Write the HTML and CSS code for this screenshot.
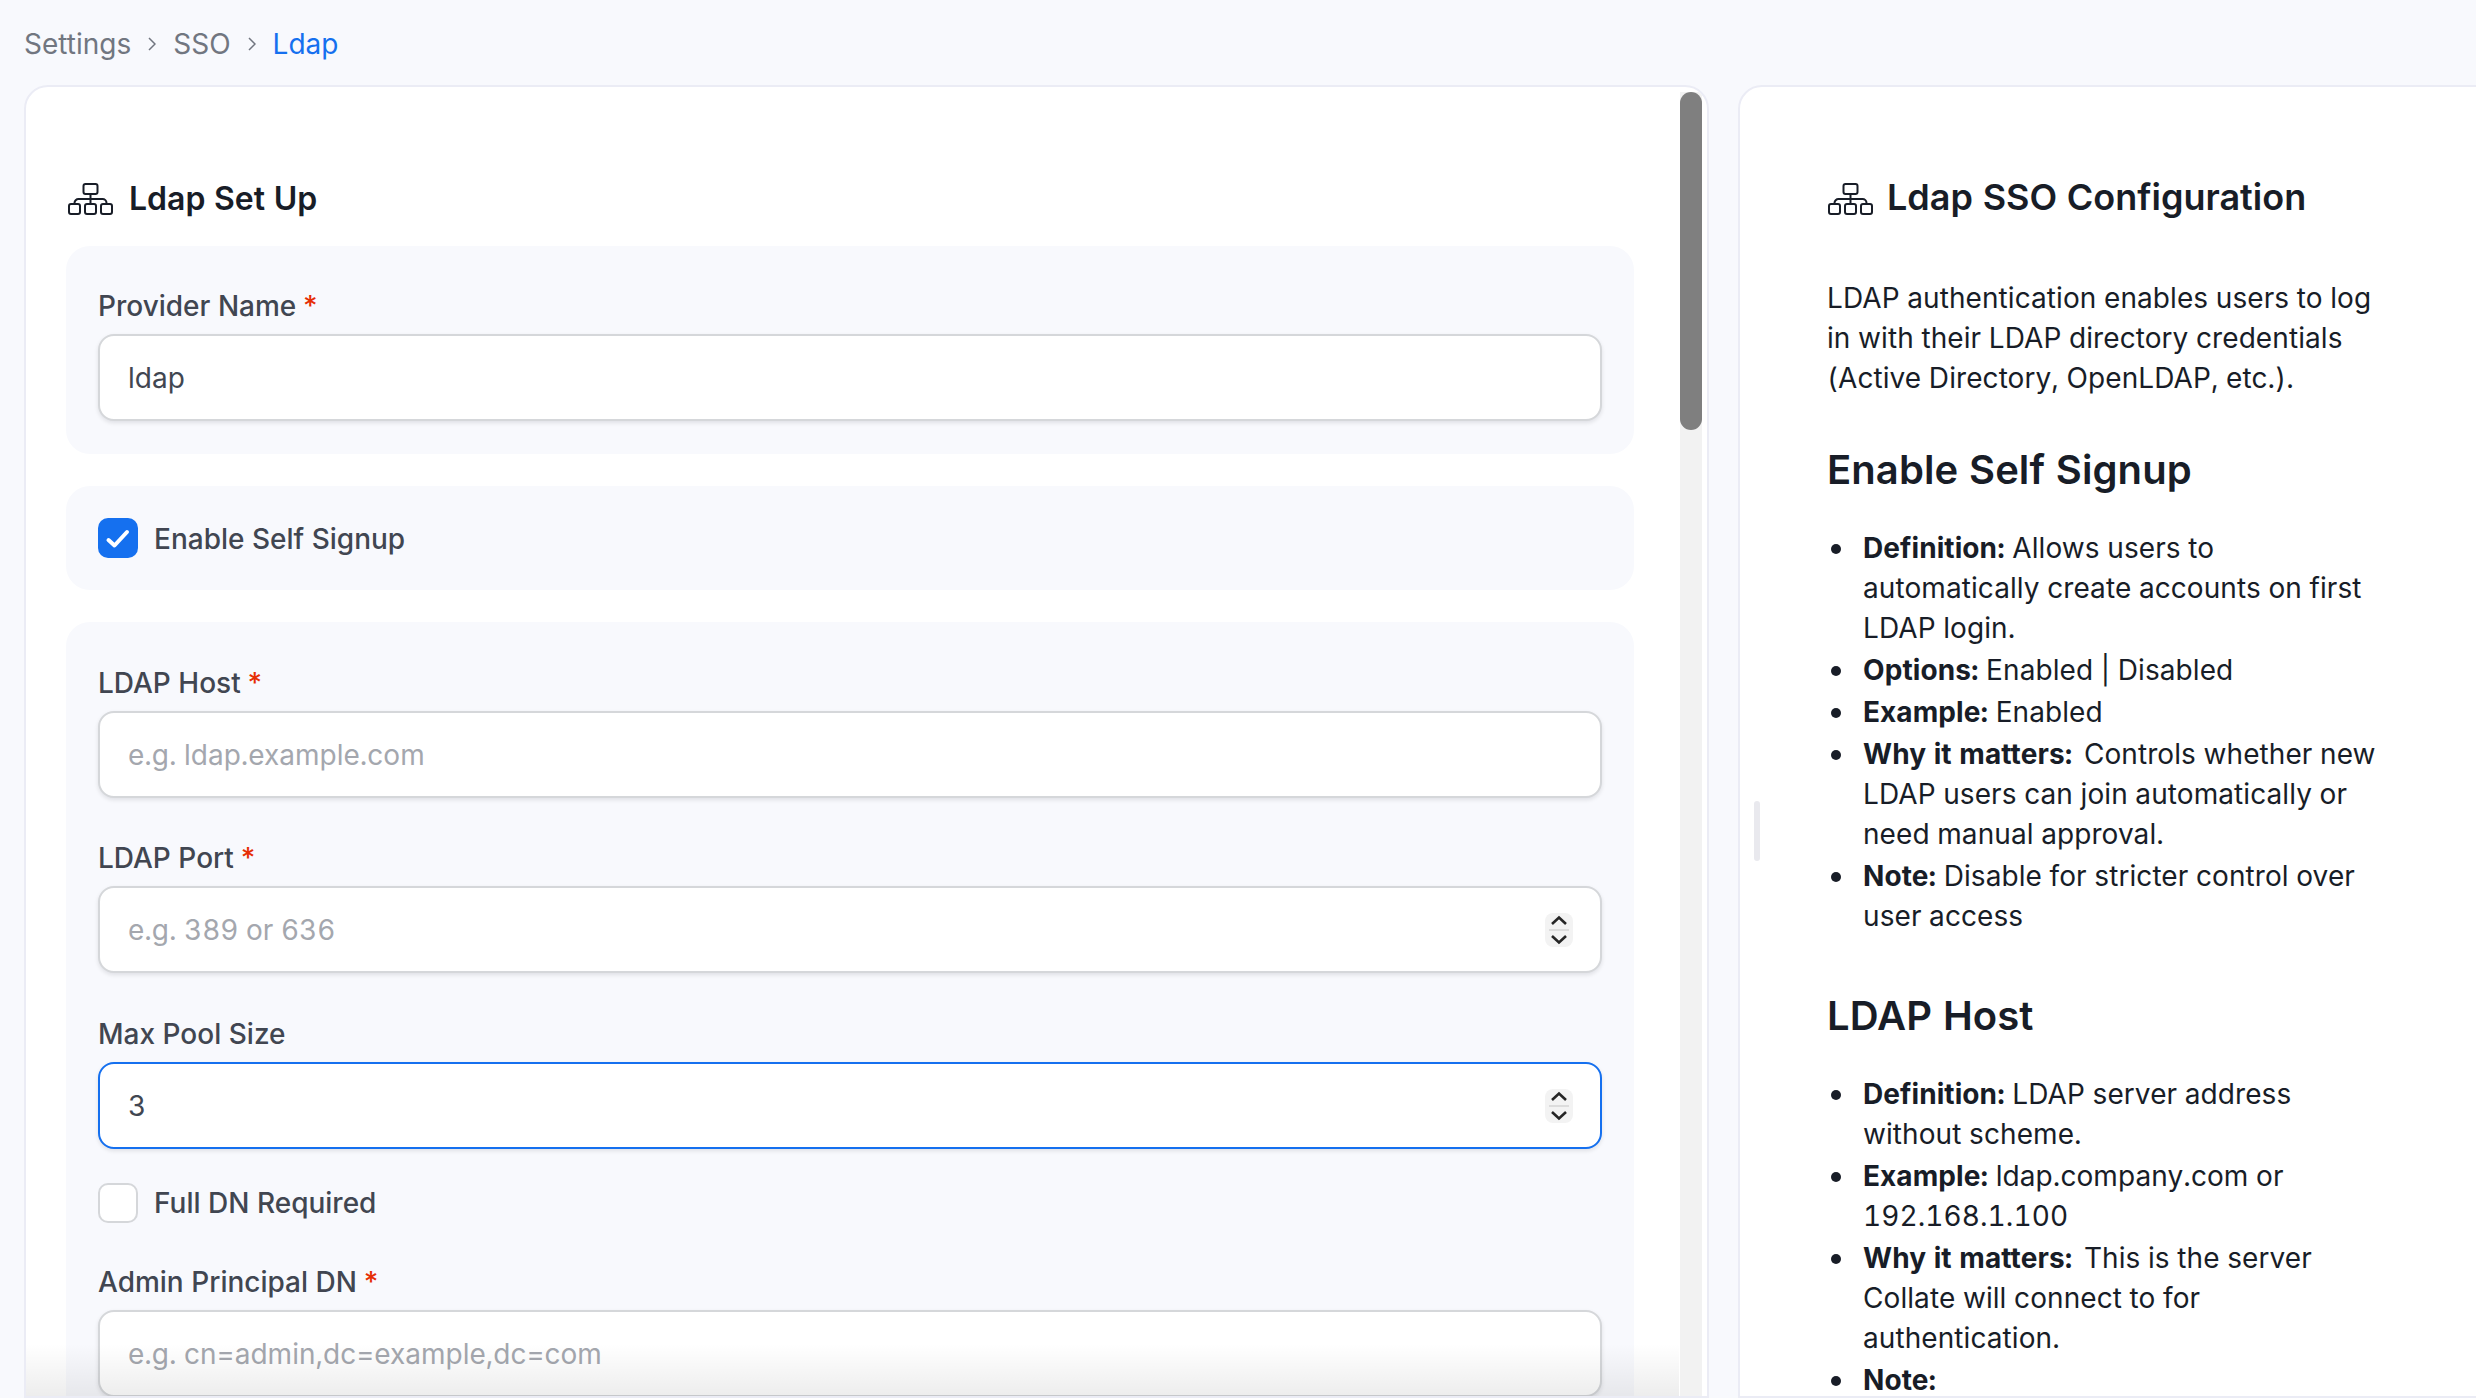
FILE: index.html
```html
<!DOCTYPE html>
<html lang="en">
<head>
<meta charset="utf-8">
<title>Ldap SSO</title>
<link rel="stylesheet" href="styles.css">
</head>
<body>
<nav class="crumbs">
  <span class="crumb">Settings</span>
  <svg class="crumb-sep" viewBox="0 0 8 14"><path d="M1 1l6 6-6 6"/></svg>
  <span class="crumb">SSO</span>
  <svg class="crumb-sep" viewBox="0 0 8 14"><path d="M1 1l6 6-6 6"/></svg>
  <span class="crumb crumb-active">Ldap</span>
</nav>
<main class="columns">
  <section class="card form-card">
    <div class="scroll-track"><div class="scroll-thumb"></div></div>
    <h2 class="form-title">
      <svg class="tree-icon" viewBox="0 0 45 32"><rect x="15.5" y="1" width="14" height="10" rx="2"/><rect x="1" y="21" width="11" height="10" rx="2"/><rect x="17" y="21" width="11" height="10" rx="2"/><rect x="33" y="21" width="11" height="10" rx="2"/><path d="M22.5 11v10M6.5 21v-1a4 4 0 0 1 4-4h24a4 4 0 0 1 4 4v1"/></svg>
      Ldap Set Up
    </h2>
    <div class="panel">
      <label class="field-label">Provider Name<span class="req">*</span></label>
      <div class="input-wrap"><input class="input" type="text" value="ldap"></div>
    </div>
    <div class="panel panel-check">
      <label class="check-row">
        <span class="check check-on"><svg viewBox="0 0 40 40"><path d="M10.5 22l6 5.5L29 14"/></svg></span>
        <span class="check-text">Enable Self Signup</span>
      </label>
    </div>
    <div class="panel panel-fields">
      <div class="field">
        <label class="field-label">LDAP Host<span class="req">*</span></label>
        <div class="input-wrap"><input class="input" type="text" placeholder="e.g. ldap.example.com"></div>
      </div>
      <div class="field">
        <label class="field-label">LDAP Port<span class="req">*</span></label>
        <div class="input-wrap">
          <input class="input" type="text" placeholder="e.g. 389 or 636">
          <svg class="spinner" viewBox="0 0 28 34"><path class="spin-line" d="M4 17h20"/><path class="spin-arrow" d="M7 11l7-6.5 7 6.5M7 23l7 6.5 7-6.5"/></svg>
        </div>
      </div>
      <div class="field field-pool">
        <label class="field-label">Max Pool Size</label>
        <div class="input-wrap">
          <input class="input input-focus" type="text" value="3">
          <svg class="spinner" viewBox="0 0 28 34"><path class="spin-line" d="M4 17h20"/><path class="spin-arrow" d="M7 11l7-6.5 7 6.5M7 23l7 6.5 7-6.5"/></svg>
        </div>
      </div>
      <label class="check-row check-row-inline"><span class="check"></span><span class="check-text">Full DN Required</span></label>
      <div class="field">
        <label class="field-label">Admin Principal DN<span class="req">*</span></label>
        <div class="input-wrap"><input class="input" type="text" placeholder="e.g. cn=admin,dc=example,dc=com"></div>
      </div>
    </div>
    <div class="bottom-fade"></div>
  </section>
  <aside class="card doc-card">
    <span class="resize-handle"></span>
    <h1 class="doc-title">
      <svg class="tree-icon" viewBox="0 0 45 32"><rect x="15.5" y="1" width="14" height="10" rx="2"/><rect x="1" y="21" width="11" height="10" rx="2"/><rect x="17" y="21" width="11" height="10" rx="2"/><rect x="33" y="21" width="11" height="10" rx="2"/><path d="M22.5 11v10M6.5 21v-1a4 4 0 0 1 4-4h24a4 4 0 0 1 4 4v1"/></svg>
      Ldap SSO Configuration
    </h1>
    <div class="doc-body">
      <p>LDAP authentication enables users to log in with their LDAP directory credentials (Active Directory, OpenLDAP, etc.).</p>
      <h3>Enable Self Signup</h3>
      <ul>
        <li><strong>Definition:</strong> Allows users to automatically create accounts on first LDAP login.</li>
        <li><strong>Options:</strong> Enabled | Disabled</li>
        <li><strong>Example:</strong> Enabled</li>
        <li><strong class="strong-gap">Why it matters:</strong> Controls whether new LDAP users can join automatically or need manual approval.</li>
        <li><strong>Note:</strong> Disable for stricter control over user access</li>
      </ul>
      <h3>LDAP Host</h3>
      <ul>
        <li><strong>Definition:</strong> LDAP server address without scheme.</li>
        <li><strong>Example:</strong> ldap.company.com or 192.168.1.100</li>
        <li><strong class="strong-gap">Why it matters:</strong> This is the server Collate will connect to for authentication.</li>
        <li><strong>Note:</strong></li>
      </ul>
    </div>
  </aside>
</main>
</body>
</html>
```
FILE: styles.css
```css
* { box-sizing: border-box; }
html, body { height: 100%; }
body {
  margin: 0;
  height: 1398px;
  overflow: hidden;
  background: #f8f9fd;
  font-family: Inter, "Noto Sans", sans-serif;
  font-size: 28px;
  font-variant-numeric: tabular-nums;
  color: #181d27;
}
.crumbs {
  display: flex;
  align-items: center;
  height: 40px;
  margin: 24px 0 21px 24px;
  line-height: 40px;
}
.crumb { color: #717680; }
.crumb-active { color: #1570ef; }
.crumb-sep {
  width: 8px;
  height: 14px;
  margin: 0 17px 0 17px;
  fill: none;
  stroke: #717680;
  stroke-width: 1.5;
}
.columns {
  display: flex;
  gap: 29px;
  margin-left: 24px;
  width: 2600px;
}
.card {
  position: relative;
  height: 1313px;
  background: #fff;
  border: 2px solid #ebecf5;
  border-radius: 24px 24px 0 0;
  overflow: hidden;
}
.form-card {
  flex: none;
  width: 1685px;
  padding: 88px 73px 0 40px;
}
.scroll-track {
  position: absolute;
  top: 5px;
  right: 5px;
  width: 22px;
  height: 1320px;
  background: #f2f2f2;
}
.scroll-thumb {
  width: 22px;
  height: 338px;
  background: #7f7f7f;
  border-radius: 11px;
}
.bottom-fade {
  position: absolute;
  left: 0;
  right: 28px;
  bottom: 0;
  height: 52px;
  background: linear-gradient(rgba(0,0,0,0), rgba(0,0,0,0.07));
}
.form-title {
  display: flex;
  align-items: center;
  gap: 16px;
  height: 48px;
  margin: 0 0 23px;
  padding-left: 2px;
  font-size: 32px;
  font-weight: 600;
  line-height: 48px;
}
.tree-icon {
  flex: none;
  width: 45px;
  height: 32px;
  fill: none;
  stroke: #181d27;
  stroke-width: 2;
}
.panel {
  padding: 40px 32px 33px;
  margin-bottom: 32px;
  background: #f8f9fd;
  border-radius: 24px;
}
.panel-check { padding: 32px; }
.panel-fields { padding-top: 41px; }
.field { margin-bottom: 40px; }
.field-pool { margin-top: 41px; }
.field-label {
  display: block;
  margin-bottom: 8px;
  line-height: 40px;
  font-weight: 500;
  color: #414651;
}
.req { margin-left: 5px; color: #e62e05; }
.input-wrap { position: relative; }
.input {
  display: block;
  width: 100%;
  height: 87px;
  padding: 1px 28px 0;
  background: #fff;
  border: 2px solid #d5d7da;
  border-radius: 16px;
  box-shadow: 0 2px 4px rgba(10,13,18,0.1);
  font: 400 28px Inter, "Noto Sans", sans-serif;
  font-variant-numeric: tabular-nums;
  color: #414651;
  outline: none;
}
.input::placeholder { color: #a4a7ae; opacity: 1; }
.input-focus { border-color: #1570ef; }
.spinner {
  position: absolute;
  top: 27px;
  right: 29px;
  width: 28px;
  height: 34px;
  background: #f3f3f3;
  border-radius: 8px;
  fill: none;
}
.spin-line { stroke: #dcdcdc; stroke-width: 2; }
.spin-arrow { stroke: #262626; stroke-width: 2.6; }
.check-row {
  display: flex;
  align-items: center;
  gap: 16px;
  height: 40px;
  font-weight: 500;
  color: #414651;
}
.check-text { padding-top: 1px; }
.check-row-inline .check-text { padding-top: 0; }
.check-row-inline { margin: -6px 0 39px; }
.check {
  flex: none;
  width: 40px;
  height: 40px;
  background: #fff;
  border: 2px solid #d5d7da;
  border-radius: 10px;
}
.check-on {
  background: #1570ef;
  border: none;
}
.check-on svg {
  display: block;
  width: 40px;
  height: 40px;
  fill: none;
  stroke: #fff;
  stroke-width: 4;
  stroke-linecap: round;
  stroke-linejoin: round;
}
.doc-card {
  flex: none;
  width: 800px;
  padding: 88px 0 0 87px;
}
.resize-handle {
  position: absolute;
  left: 14px;
  top: 714px;
  width: 6px;
  height: 60px;
  background: #e9e9ee;
  border-radius: 3px;
}
.doc-title {
  display: flex;
  align-items: flex-start;
  gap: 14px;
  height: 48px;
  margin: 0 0 55px;
  padding-left: 1px;
  font-size: 36px;
  font-weight: 600;
  line-height: 45px;
}
.doc-title .tree-icon { align-self: center; }
.doc-body { width: 556px; line-height: 40px; letter-spacing: 0.08px; }
.doc-body p { margin: 0 0 48px; }
.doc-body h3 {
  margin: 0 0 34px;
  font-size: 40px;
  font-weight: 600;
  line-height: 48px;
}
.doc-body ul { margin: 0 0 56px; padding: 0 0 0 36px; list-style: none; }
.doc-body li { position: relative; margin-bottom: 2px; }
.doc-body li::before {
  content: "";
  position: absolute;
  left: -32px;
  top: 16px;
  width: 10px;
  height: 10px;
  background: #181d27;
  border-radius: 50%;
}
.doc-body strong { font-weight: 650; }
.doc-body .strong-gap { margin-right: 4px; }
```
